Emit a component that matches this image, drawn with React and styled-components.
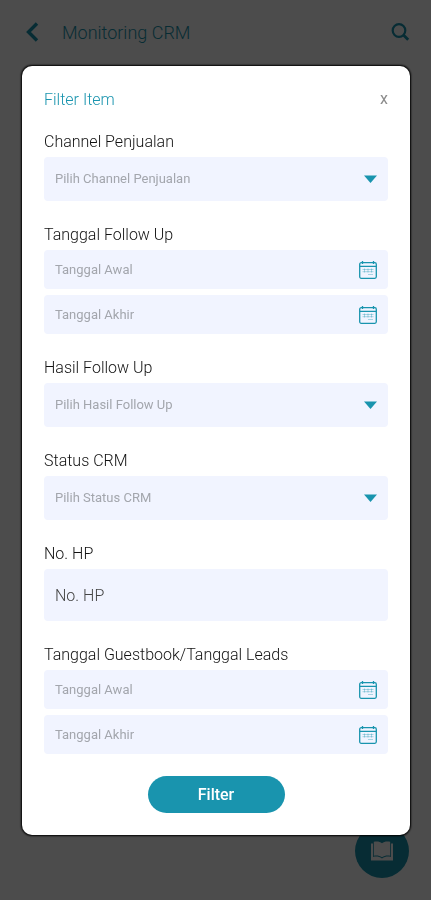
import React, { useState } from "react";
import styled, { createGlobalStyle } from "styled-components";

const GlobalStyle = createGlobalStyle`
  * {
    box-sizing: border-box;
  }
  body {
    margin: 0;
    background-color: white;
    font-family: Roboto, "Liberation Sans", sans-serif;
  }
  button, input, select {
    font-family: inherit;
  }
`;

const Page = styled.div`
  min-height: 100vh;
`;
const Header = styled.header`
  height: 64px;
  padding: 0 21px 0 24px;
  display: flex;
  align-items: center;
  gap: 20px;
`;
const Title = styled.h1`
  flex: 1;
  margin: 0;
  font-size: 18px;
  font-weight: 300;
  color: #1994ae;
`;
const IconButton = styled.button`
  display: flex;
  padding: 0;
  border: none;
  background: none;
  color: #1994ae;
  cursor: pointer;
`;
const Fab = styled.button`
  position: fixed;
  right: 22px;
  bottom: 22px;
  width: 54px;
  height: 54px;
  display: flex;
  align-items: center;
  justify-content: center;
  border: none;
  border-radius: 50%;
  background-color: #1994ae;
  color: white;
`;
const Overlay = styled.div`
  position: fixed;
  inset: 0;
  overflow-y: auto;
  padding: 66px 21px 24px 22px;
  background-color: rgba(0, 0, 0, 0.7);
`;
const Dialog = styled.form`
  padding: 22px;
  border-radius: 10px;
  background-color: white;
  box-shadow: 0 0 2px 1px black;
`;
const DialogHead = styled.div`
  display: flex;
  align-items: center;
  justify-content: space-between;
  height: 22px;
  margin-bottom: 22px;
`;
const DialogTitle = styled.h2`
  margin: 0;
  font-size: 16px;
  font-weight: 300;
  color: #1994ae;
`;
const Close = styled.button`
  padding: 0;
  border: none;
  background: none;
  font-size: 16px;
  line-height: 20px;
  color: #8c8c8c;
  cursor: pointer;
`;
const Fields = styled.div`
  display: flex;
  flex-direction: column;
  gap: 24px;
`;
const Group = styled.div`
  display: flex;
  flex-direction: column;
  gap: 6px;
`;
const Label = styled.label`
  font-size: 16px;
  font-weight: 300;
  line-height: 20px;
  margin-bottom: -1px;
  color: #111;
`;
const Box = styled.div`
  display: flex;
  align-items: center;
  height: ${(props) => props.$height}px;
  padding-right: ${(props) => props.$end || 0}px;
  border-radius: 4px;
  background-color: #f1f4ff;
  color: #1994ae;
`;
const Select = styled.select`
  flex: 1;
  min-width: 0;
  height: 100%;
  padding: 0 0 2px 11px;
  border: none;
  outline: none;
  appearance: none;
  background: none;
  font-size: 13px;
  color: #a3a6ad;
`;
const Input = styled.input`
  flex: 1;
  min-width: 0;
  height: 100%;
  padding: 0 11px;
  border: none;
  outline: none;
  background: none;
  font-size: ${(props) => (props.$large ? 16 : 13)}px;
  font-weight: ${(props) => (props.$large ? 300 : 400)};
  color: #333;

  &::placeholder {
    color: ${(props) => (props.$large ? "#444" : "#a3a6ad")};
  }
`;
const Submit = styled.button`
  display: block;
  width: 137px;
  height: 37px;
  margin: 22px auto 0;
  border: none;
  border-radius: 19px;
  background-color: #1994ae;
  font-size: 16px;
  font-weight: 500;
  color: white;
  cursor: pointer;
`;

const BackIcon = () => (
  <svg width="18" height="20" viewBox="0 0 18 20" fill="none">
    <path d="M13 1.500 4.500 10 13 18.500" stroke="currentColor" strokeWidth="3.400" />
  </svg>
);
const SearchIcon = () => (
  <svg width="20" height="20" viewBox="0 0 20 20" fill="none">
    <circle cx="9" cy="8.500" r="6.300" stroke="currentColor" strokeWidth="2.200" />
    <path d="m13.200 12.800 5 5" stroke="currentColor" strokeWidth="2.800" />
  </svg>
);
const BookIcon = () => (
  <svg width="22" height="20" viewBox="0 0 22 20">
    <path
      d="M0 2.500h2V16c3.500-.8 6-.4 9 1.400 3-1.800 5.500-2.200 9-1.400V2.500h2V19.500H0z"
      fill="currentColor"
    />
    <path
      d="M2.800.8C6 0 8.800.4 11 2.200 13.200.4 16 0 19.200.8v14c-3-.6-5.700-.2-8.200 1.400-2.500-1.600-5.200-2-8.200-1.400z"
      fill="currentColor"
    />
  </svg>
);
const ArrowIcon = () => (
  <svg width="13" height="8" viewBox="0 0 13 8">
    <path d="M0 .5h13L6.500 8z" fill="currentColor" />
  </svg>
);
const CalendarIcon = () => (
  <svg width="18" height="18" viewBox="0 0 18 18" fill="none" stroke="currentColor">
    <rect x=".7" y="1.700" width="16.600" height="15.600" rx="1.500" strokeWidth="1.300" />
    <path d="M.7 5.300h16.600M3.500 0v3M14.500 0v3" strokeWidth="1.300" />
    <path
      d="M3.500 8.500h11M3.500 10.700h11M9 13.500h5M5.500 7.500v4M9 7.500v4M12.500 7.500v4"
      opacity=".35"
    />
  </svg>
);

const SelectField = ({ id, label, placeholder }) => (
  <Group>
    <Label htmlFor={id}>{label}</Label>
    <Box $height={44} $end={11}>
      <Select id={id} name={id}>
        <option value="">{placeholder}</option>
      </Select>
      <ArrowIcon />
    </Box>
  </Group>
);

const DateField = ({ id, label }) => (
  <Group>
    <Label htmlFor={id + "-awal"}>{label}</Label>
    <Box $height={39} $end={11}>
      <Input id={id + "-awal"} placeholder="Tanggal Awal" />
      <IconButton type="button" aria-label="Tanggal Awal">
        <CalendarIcon />
      </IconButton>
    </Box>
    <Box $height={39} $end={11}>
      <Input aria-label="Tanggal Akhir" placeholder="Tanggal Akhir" />
      <IconButton type="button" aria-label="Tanggal Akhir">
        <CalendarIcon />
      </IconButton>
    </Box>
  </Group>
);

const App = () => {
  const [open, setOpen] = useState(true);

  return (
    <Page>
      <GlobalStyle />
      <Header>
        <IconButton aria-label="Kembali">
          <BackIcon />
        </IconButton>
        <Title>Monitoring CRM</Title>
        <IconButton aria-label="Cari" onClick={() => setOpen(true)}>
          <SearchIcon />
        </IconButton>
      </Header>
      <Fab aria-label="Buku">
        <BookIcon />
      </Fab>
      {open && (
        <Overlay>
          <Dialog role="dialog" onSubmit={(e) => e.preventDefault()}>
            <DialogHead>
              <DialogTitle>Filter Item</DialogTitle>
              <Close type="button" onClick={() => setOpen(false)}>
                x
              </Close>
            </DialogHead>
            <Fields>
              <SelectField
                id="channel"
                label="Channel Penjualan"
                placeholder="Pilih Channel Penjualan"
              />
              <DateField id="follow-up" label="Tanggal Follow Up" />
              <SelectField
                id="hasil"
                label="Hasil Follow Up"
                placeholder="Pilih Hasil Follow Up"
              />
              <SelectField
                id="status"
                label="Status CRM"
                placeholder="Pilih Status CRM"
              />
              <Group>
                <Label htmlFor="hp">No. HP</Label>
                <Box $height={52}>
                  <Input id="hp" type="tel" placeholder="No. HP" $large />
                </Box>
              </Group>
              <DateField id="guestbook" label="Tanggal Guestbook/Tanggal Leads" />
            </Fields>
            <Submit type="submit">Filter</Submit>
          </Dialog>
        </Overlay>
      )}
    </Page>
  );
};

export default App;
